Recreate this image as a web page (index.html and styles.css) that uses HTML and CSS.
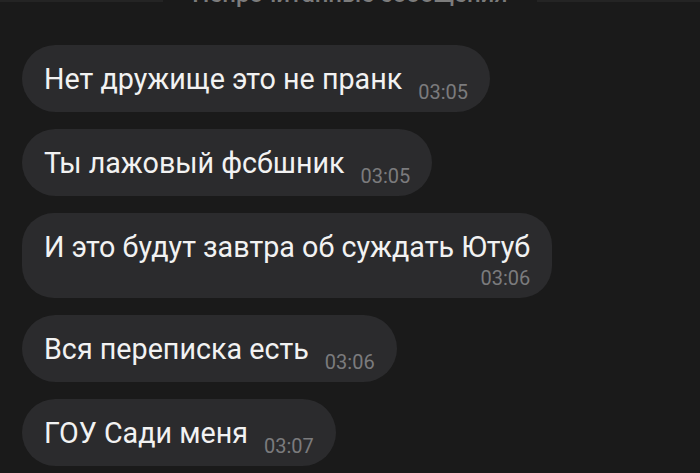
FILE: index.html
```html
<!DOCTYPE html>
<html lang="ru">
<head>
    <meta charset="UTF-8">
    <meta name="viewport" content="width=device-width, initial-scale=1.0">
    <title>Чат</title>
    <link rel="stylesheet" href="styles.css">
</head>
<body>
    <div class="chat">
        <!-- Unread separator, cut at the top of the screen -->
        <div class="unread">
            <span class="unread-line"></span>
            <span class="unread-text">Непрочитанные сообщения</span>
            <span class="unread-line"></span>
        </div>

        <div class="messages">
            <div class="bubble">
                <span class="text">Нет дружище это не пранк</span>
                <span class="time">03:05</span>
            </div>
            <div class="bubble">
                <span class="text">Ты лажовый фсбшник</span>
                <span class="time">03:05</span>
            </div>
            <div class="bubble bubble-wrap">
                <span class="text">И это будут завтра об суждать Ютуб</span>
                <span class="time">03:06</span>
            </div>
            <div class="bubble">
                <span class="text">Вся переписка есть</span>
                <span class="time">03:06</span>
            </div>
            <div class="bubble">
                <span class="text">ГОУ Сади меня</span>
                <span class="time">03:07</span>
            </div>
        </div>
    </div>
</body>
</html>
```

FILE: styles.css
```css
body {
    margin: 0;
    background-color: #1a1a1a;
    font-family: Roboto, "Noto Sans", sans-serif;
    overflow: hidden;
}
.chat {
    width: 700px;
    height: 473px;
}
.unread {
    display: flex;
    align-items: flex-start;
    height: 8px;
    overflow: visible;
}
.unread-line {
    flex: 1;
    height: 2px;
    background-color: #242424;
}
.unread-text {
    margin: -20px 29px 0;
    font-size: 24px;
    font-weight: 500;
    line-height: 28px;
    color: #7c7c7c;
}
.messages {
    display: flex;
    flex-direction: column;
    align-items: flex-start;
    gap: 17px;
    padding: 37px 0 0 22px;
}
.bubble {
    display: flex;
    align-items: flex-end;
    gap: 16px;
    padding: 14px 22px 13px 22px;
    background-color: #2b2b2d;
    border-radius: 34px;
}
.text {
    font-size: 28.7px;
    line-height: 40px;
    color: #f2f2f2;
}
.time {
    font-size: 20px;
    line-height: 20px;
    margin-bottom: -3px;
    color: #7b7b7d;
}
.bubble-wrap {
    flex-direction: column;
    gap: 0;
    padding-bottom: 10px;
    border-radius: 32px;
}
.bubble-wrap .time {
    align-self: flex-end;
    margin: 1px 0 0;
}
```
